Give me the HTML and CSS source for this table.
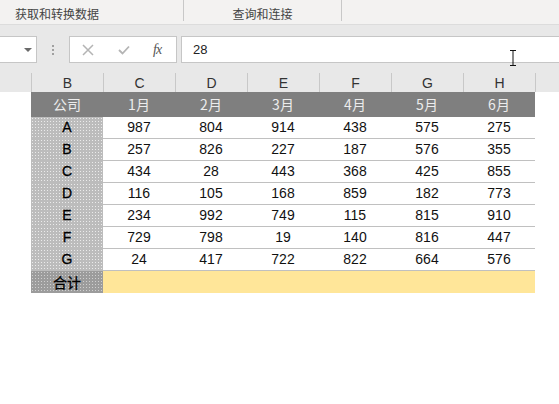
FILE: index.html
```html
<!DOCTYPE html>
<html lang="zh">
<head>
<meta charset="utf-8">
<title>Excel</title>
<link rel="stylesheet" href="styles.css">
</head>
<body>
<div class="ribbon">
  <div class="grp grp1">获取和转换数据</div>
  <div class="grp grp2">查询和连接</div>
</div>
<div class="band">
  <div class="fbar">
    <div class="namebox"><span class="arrow"></span></div>
    <div class="dots"><i></i><i></i><i></i></div>
    <div class="fbtns">
      <svg class="ico" width="12" height="12" viewBox="0 0 12 12"><path d="M1 1L11 11M11 1L1 11" stroke="#b4b4b4" stroke-width="1.5" fill="none"/></svg>
      <svg class="ico" width="12" height="10" viewBox="0 0 12 10"><path d="M1 5L4.5 8.5L11 1.5" stroke="#b4b4b4" stroke-width="1.8" fill="none"/></svg>
      <span class="fx">fx</span>
    </div>
    <div class="finput">28
      <svg class="ibeam" width="8" height="16" viewBox="0 0 8 16"><path d="M1 0.5H7M4 0.5V15.5M1 15.5H7" stroke="#111" stroke-width="1" fill="none"/></svg>
    </div>
  </div>
  <div class="colhdr">
    <div class="corner"></div>
    <div class="ch">B</div><div class="ch">C</div><div class="ch">D</div><div class="ch">E</div><div class="ch">F</div><div class="ch">G</div><div class="ch">H</div>
  </div>
</div>
<div class="sheet">
  <div class="row head"><div class="c">公司</div><div class="c">1月</div><div class="c">2月</div><div class="c">3月</div><div class="c">4月</div><div class="c">5月</div><div class="c">6月</div></div>
  <div class="row"><div class="k">A</div><div class="c">987</div><div class="c">804</div><div class="c">914</div><div class="c">438</div><div class="c">575</div><div class="c">275</div></div>
  <div class="row"><div class="k">B</div><div class="c">257</div><div class="c">826</div><div class="c">227</div><div class="c">187</div><div class="c">576</div><div class="c">355</div></div>
  <div class="row"><div class="k">C</div><div class="c">434</div><div class="c">28</div><div class="c">443</div><div class="c">368</div><div class="c">425</div><div class="c">855</div></div>
  <div class="row"><div class="k">D</div><div class="c">116</div><div class="c">105</div><div class="c">168</div><div class="c">859</div><div class="c">182</div><div class="c">773</div></div>
  <div class="row"><div class="k">E</div><div class="c">234</div><div class="c">992</div><div class="c">749</div><div class="c">115</div><div class="c">815</div><div class="c">910</div></div>
  <div class="row"><div class="k">F</div><div class="c">729</div><div class="c">798</div><div class="c">19</div><div class="c">140</div><div class="c">816</div><div class="c">447</div></div>
  <div class="row"><div class="k">G</div><div class="c">24</div><div class="c">417</div><div class="c">722</div><div class="c">822</div><div class="c">664</div><div class="c">576</div></div>
  <div class="row total"><div class="k">合计</div><div class="y"></div></div>
</div>
</body>
</html>
```
FILE: styles.css
```css
html, body {
  margin: 0;
  padding: 0;
  background: #ffffff;
}
body {
  width: 559px;
  height: 404px;
  overflow: hidden;
  font-family: "Liberation Sans", "Noto Sans CJK SC", sans-serif;
}
.ribbon {
  height: 24px;
  background: #f3f2f1;
  border-bottom: 1px solid #dcdcdc;
  display: flex;
  align-items: flex-start;
  font-family: "Noto Sans CJK SC", sans-serif;
  font-size: 12px;
  color: #444;
}
.grp {
  height: 21px;
  box-sizing: border-box;
  padding-top: 5px;
  line-height: 17px;
  border-right: 1px solid #c8c8c8;
}
.grp1 {
  width: 184px;
  padding-left: 15px;
}
.grp2 {
  width: 158px;
  text-align: center;
}
.band {
  background: #e8e8e8;
  padding-top: 11px;
}
.fbar {
  display: flex;
  height: 27px;
}
.namebox {
  width: 37px;
  box-sizing: border-box;
  background: #fff;
  border: 1px solid #c6c6c6;
  border-left: none;
  position: relative;
}
.arrow {
  position: absolute;
  left: 24px;
  top: 11px;
  width: 0;
  height: 0;
  border-left: 4px solid transparent;
  border-right: 4px solid transparent;
  border-top: 4px solid #6a6a6a;
}
.dots {
  width: 32px;
  display: flex;
  flex-direction: column;
  align-items: center;
  justify-content: center;
  gap: 2px;
}
.dots i {
  display: block;
  width: 2px;
  height: 2px;
  background: #a0a0a0;
}
.fbtns {
  width: 108px;
  box-sizing: border-box;
  background: #fff;
  border: 1px solid #c6c6c6;
  display: flex;
  align-items: center;
  padding-left: 12px;
}
.fbtns .ico:nth-child(1) { margin-right: 24px; }
.fbtns .ico:nth-child(2) { margin-right: 23px; }
.fx {
  font-family: "Liberation Serif", serif;
  font-style: italic;
  font-size: 14px;
  color: #555;
  letter-spacing: -1px;
}
.finput {
  flex: 1;
  margin-left: 4px;
  box-sizing: border-box;
  background: #fff;
  border: 1px solid #c6c6c6;
  border-right: none;
  padding-left: 11px;
  font-size: 13px;
  line-height: 25px;
  color: #222;
  position: relative;
}
.ibeam {
  position: absolute;
  left: 327px;
  top: 13px;
}
.colhdr {
  margin-top: 10px;
  display: flex;
  height: 19px;
}
.corner {
  width: 32px;
  box-sizing: border-box;
  border-right: 1px solid #c8c8c8;
}
.ch {
  width: 72px;
  box-sizing: border-box;
  border-right: 1px solid #c8c8c8;
  text-align: center;
  font-size: 14px;
  line-height: 21px;
  color: #333;
}
.sheet {
  margin-left: 31px;
  width: 504px;
}
.row {
  display: flex;
  height: 22px;
}
.row .c, .row .k, .row .y {
  width: 72px;
  box-sizing: border-box;
  text-align: center;
  font-size: 14px;
  line-height: 21px;
  color: #111;
}
.row .c {
  border-bottom: 1px solid #c0c0c0;
}
.row .k {
  color: #000;
  -webkit-text-stroke: 0.3px #000;
  background-color: #bcbcbc;
  background-image: radial-gradient(circle, #ebebeb 0.7px, transparent 1px);
  background-size: 3px 3px;
}
.head {
  height: 25px;
  background: #7f7f7f;
}
.head .c {
  border-bottom: none;
  font-family: "Noto Sans CJK SC", sans-serif;
  color: #ececec;
  line-height: 25px;
}
.total .k {
  font-family: "Noto Sans CJK SC", sans-serif;
  background-color: #9c9c9c;
  background-image: radial-gradient(circle, #cfcfcf 0.7px, transparent 1px);
  line-height: 22px;
}
.total .y {
  width: 432px;
  background: #ffe699;
}
```
